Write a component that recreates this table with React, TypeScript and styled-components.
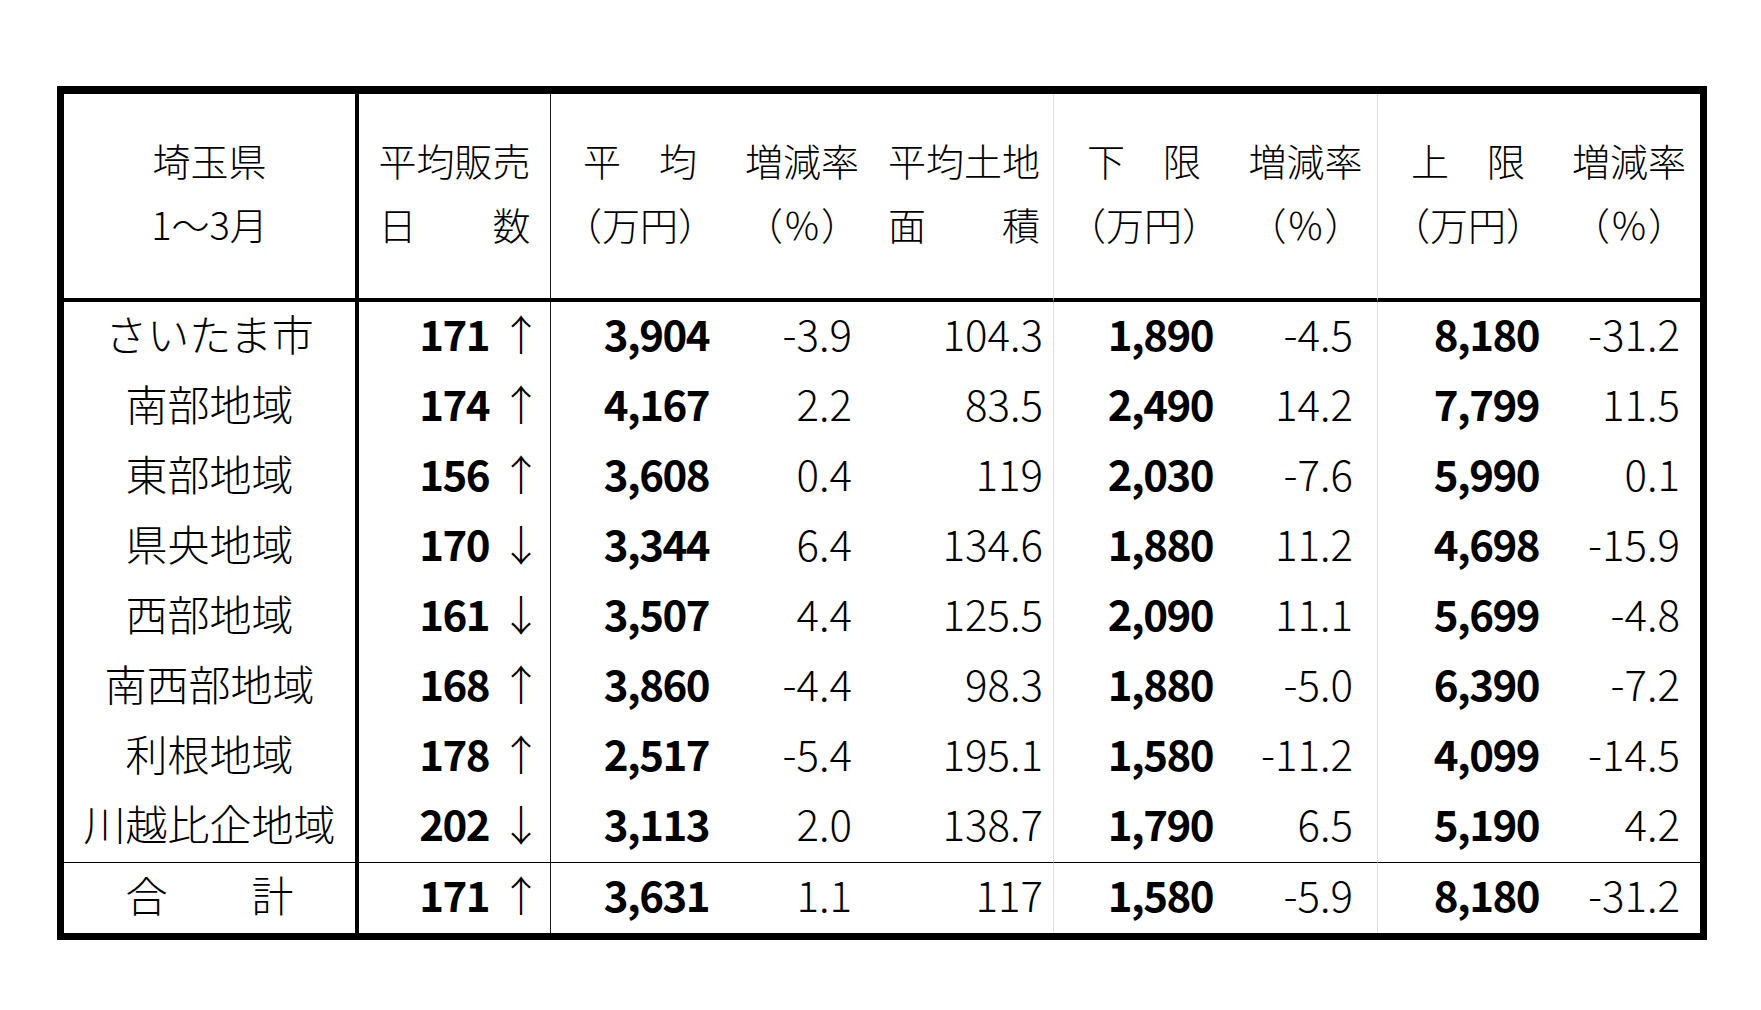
import React from 'react';
import styled, { createGlobalStyle, css } from 'styled-components';

const GlobalStyle = createGlobalStyle`
  html, body { margin: 0; padding: 0; background: #fff; }
  body {
    font-family: "Noto Sans CJK JP", "Noto Sans", sans-serif;
    color: #000;
  }
`;

type Divider = 'thick' | 'thin' | 'light' | 'none';
type RowKind = 'head' | 'body' | 'total';

const dividerLine: Record<Divider, string> = {
  thick: '4px solid #000',
  thin: '1px solid #1a1a1a',
  light: '1px solid #dedede',
  none: 'none',
};

const Page = styled.div`
  padding: 86px 0 40px 57px;
`;

const Table = styled.div`
  display: grid;
  box-sizing: border-box;
  width: 1650px;
  border: 7px solid #000;
  border-top-width: 8px;
  grid-template-columns: 295px 192px 178px 146px 179px 180px 144px 180px 142px;
  grid-template-rows: 208px repeat(8, 70px) 71px;
`;

const BaseCell = styled.div<{ $divider: Divider; $row: RowKind }>`
  box-sizing: border-box;
  display: flex;
  align-items: center;
  min-width: 0;
  padding-bottom: 8px;
  border-right: ${(p) => dividerLine[p.$divider]};
  ${(p) =>
    p.$row === 'head' &&
    css`
      border-bottom: 4px solid #000;
    `}
  ${(p) =>
    p.$row === 'total' &&
    css`
      border-top: 1px solid #000;
    `}
`;

const HeadCell = styled(BaseCell)`
  flex-direction: column;
  justify-content: center;
  font-size: 38px;
  font-weight: 300;
  line-height: 64px;
  white-space: pre;
`;

const HeadLine = styled.span`
  display: block;
  text-align: center;
`;

const NameCell = styled(BaseCell)`
  justify-content: center;
  font-size: 42px;
  font-weight: 300;
  line-height: 1;
  white-space: pre;
`;

const NumCell = styled(BaseCell)<{ $bold: boolean; $pad: number }>`
  justify-content: flex-end;
  padding-right: ${(p) => p.$pad}px;
  font-size: 42px;
  line-height: 1;
  font-weight: ${(p) => (p.$bold ? 700 : 300)};
  letter-spacing: ${(p) => (p.$bold ? '-1.5px' : '0')};
`;

const DaysCell = styled(BaseCell)`
  justify-content: flex-end;
  gap: 11px;
  padding-right: 8px;
  font-size: 42px;
  line-height: 1;
`;

const DaysValue = styled.span`
  font-weight: 700;
  letter-spacing: -1.5px;
`;

const Arrow = styled.span`
  display: inline-block;
  width: 42px;
  text-align: center;
  font-weight: 300;
`;

type Column = { divider: Divider; bold: boolean; pad: number };

// columns 3..9 (numeric)
const numCols: Column[] = [
  { divider: 'none', bold: true, pad: 20 },
  { divider: 'none', bold: false, pad: 23 },
  { divider: 'light', bold: false, pad: 10 },
  { divider: 'none', bold: true, pad: 21 },
  { divider: 'light', bold: false, pad: 24 },
  { divider: 'none', bold: true, pad: 19 },
  { divider: 'none', bold: false, pad: 20 },
];

const headers: [string, string][] = [
  ['平　均', '（万円）'],
  ['増減率', '（％）'],
  ['平均土地', '面　　積'],
  ['下　限', '（万円）'],
  ['増減率', '（％）'],
  ['上　限', '（万円）'],
  ['増減率', '（％）'],
];

type Row = { name: string; days: string; up: boolean; values: string[] };

const rows: Row[] = [
  { name: 'さいたま市', days: '171', up: true, values: ['3,904', '-3.9', '104.3', '1,890', '-4.5', '8,180', '-31.2'] },
  { name: '南部地域', days: '174', up: true, values: ['4,167', '2.2', '83.5', '2,490', '14.2', '7,799', '11.5'] },
  { name: '東部地域', days: '156', up: true, values: ['3,608', '0.4', '119', '2,030', '-7.6', '5,990', '0.1'] },
  { name: '県央地域', days: '170', up: false, values: ['3,344', '6.4', '134.6', '1,880', '11.2', '4,698', '-15.9'] },
  { name: '西部地域', days: '161', up: false, values: ['3,507', '4.4', '125.5', '2,090', '11.1', '5,699', '-4.8'] },
  { name: '南西部地域', days: '168', up: true, values: ['3,860', '-4.4', '98.3', '1,880', '-5.0', '6,390', '-7.2'] },
  { name: '利根地域', days: '178', up: true, values: ['2,517', '-5.4', '195.1', '1,580', '-11.2', '4,099', '-14.5'] },
  { name: '川越比企地域', days: '202', up: false, values: ['3,113', '2.0', '138.7', '1,790', '6.5', '5,190', '4.2'] },
  { name: '合　　計', days: '171', up: true, values: ['3,631', '1.1', '117', '1,580', '-5.9', '8,180', '-31.2'] },
];

export default function App() {
  return (
    <>
      <GlobalStyle />
      <Page>
        <Table>
          <HeadCell $divider="thick" $row="head">
            <HeadLine>埼玉県</HeadLine>
            <HeadLine>1〜3月</HeadLine>
          </HeadCell>
          <HeadCell $divider="thin" $row="head">
            <HeadLine>平均販売</HeadLine>
            <HeadLine>日　　数</HeadLine>
          </HeadCell>
          {headers.map(([a, b], i) => (
            <HeadCell key={i} $divider={numCols[i].divider} $row="head">
              <HeadLine>{a}</HeadLine>
              <HeadLine>{b}</HeadLine>
            </HeadCell>
          ))}

          {rows.map((r, ri) => {
            const kind: RowKind = ri === rows.length - 1 ? 'total' : 'body';
            return (
              <React.Fragment key={ri}>
                <NameCell $divider="thick" $row={kind}>
                  {r.name}
                </NameCell>
                <DaysCell $divider="thin" $row={kind}>
                  <DaysValue>{r.days}</DaysValue>
                  <Arrow>{r.up ? '↑' : '↓'}</Arrow>
                </DaysCell>
                {r.values.map((v, ci) => (
                  <NumCell
                    key={ci}
                    $divider={numCols[ci].divider}
                    $row={kind}
                    $bold={numCols[ci].bold}
                    $pad={numCols[ci].pad}
                  >
                    {v}
                  </NumCell>
                ))}
              </React.Fragment>
            );
          })}
        </Table>
      </Page>
    </>
  );
}
